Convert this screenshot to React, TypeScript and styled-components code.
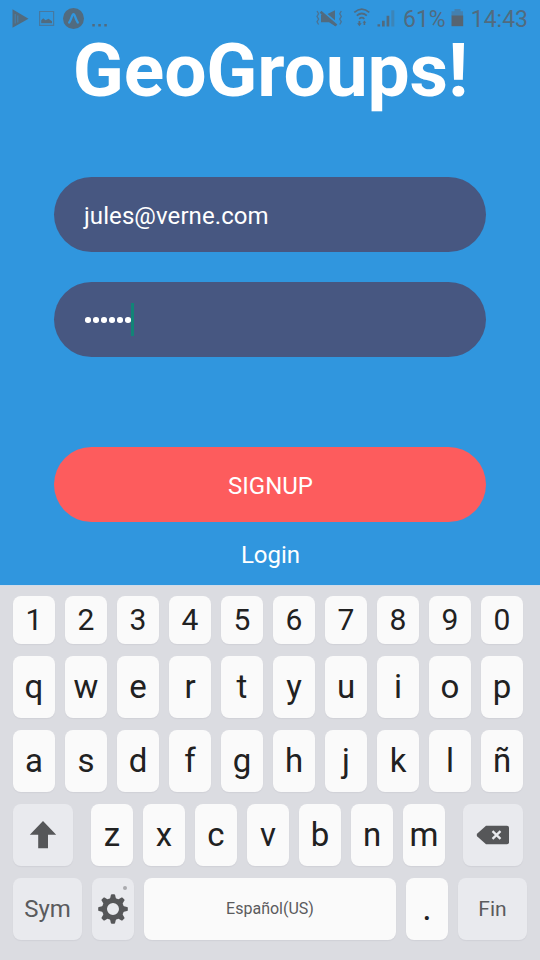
import React from 'react';
import styled, { createGlobalStyle } from 'styled-components';

const GlobalStyle = createGlobalStyle`
  *, *::before, *::after { box-sizing: border-box; }
  body { margin: 0; background: #3096de; font-family: Roboto, "Noto Sans", sans-serif; }
`;

const Screen = styled.div`
  width: 540px;
  height: 960px;
  display: flex;
  flex-direction: column;
  overflow: hidden;
  background: #3096de;
`;

const StatusBar = styled.header`
  height: 37px;
  flex: none;
  display: flex;
  justify-content: space-between;
  color: #516b7f;
`;

const StatusGroup = styled.div`
  display: flex;
`;

const StatusText = styled.span<{ $left: number }>`
  margin-left: ${(p) => p.$left}px;
  font-size: 23px;
  line-height: 40px;
  white-space: nowrap;
`;

const Clock = styled(StatusText)`
  margin-right: 12px;
`;

const BatteryBox = styled.div`
  display: flex;
  margin-left: 5px;
`;

const Form = styled.main`
  height: 548px;
  flex: none;
  display: flex;
  flex-direction: column;
  align-items: center;
  color: #fff;
`;

const Title = styled.h1`
  margin: 0 0 74px 1px;
  height: 66px;
  line-height: 66px;
  font-size: 75px;
  font-weight: 700;
  letter-spacing: -0.15px;
  white-space: nowrap;
`;

const Field = styled.div`
  width: 432px;
  height: 75px;
  flex: none;
  margin-bottom: 30px;
  padding: 2px 30px 0;
  display: flex;
  align-items: center;
  border-radius: 37.5px;
  background: #475781;
  font-size: 24px;
  letter-spacing: 0.09px;
`;

const Dots = styled.div`
  display: flex;
  gap: 2.6px;
  padding: 0 0 1px 1px;
`;

const Dot = styled.i`
  width: 5.5px;
  height: 5.5px;
  border-radius: 50%;
  background: #fff;
`;

const Caret = styled.span`
  width: 3px;
  height: 33px;
  margin-top: -2px;
  background: #128477;
`;

const SignupButton = styled.button`
  width: 432px;
  height: 75px;
  flex: none;
  margin: 60px 0 0;
  padding: 3px 0 0 1px;
  border: 0;
  border-radius: 37.5px;
  background: #fd5c5d;
  color: #fff;
  font: 400 24px Roboto, sans-serif;
`;

const LoginLink = styled.a`
  margin: 18px 0 0 1px;
  line-height: 30px;
  font-size: 24px;
`;

const Keyboard = styled.section`
  height: 375px;
  flex: none;
  padding: 10px 13px 0;
  display: flex;
  flex-direction: column;
  gap: 12px;
  background: #dbdce1;
  border-top: 1px solid #d0dbe9;
`;

const KeyRow = styled.div`
  display: flex;
  gap: 10px;
`;

const KeyGroup = styled.div`
  display: flex;
  gap: 10px;
  margin: 0 8px;
`;

const Key = styled.div<{ $w?: number; $h?: number; $fn?: boolean; $muted?: boolean; $size?: number; $lift?: number }>`
  position: relative;
  flex: none;
  width: ${(p) => p.$w ?? 42}px;
  height: ${(p) => p.$h ?? 62}px;
  padding-bottom: ${(p) => p.$lift ?? 0}px;
  display: flex;
  align-items: center;
  justify-content: center;
  border-radius: 8px;
  background: ${(p) => (p.$fn ? '#e9eaee' : '#fafafa')};
  box-shadow: 0 1px 1px rgba(90, 92, 105, 0.08);
  color: ${(p) => (p.$fn || p.$muted ? '#5a5b5d' : '#212121')};
  font-size: ${(p) => p.$size ?? 33}px;
  line-height: 1;
`;

const HintDot = styled.i`
  position: absolute;
  top: 8px;
  right: 7px;
  width: 4px;
  height: 4px;
  border-radius: 50%;
  background: #aaabae;
`;

const LeftIcons = () => (
  <svg width="112" height="37" viewBox="0 0 112 37" fill="#516b7f">
    <path d="M12.5 9.3 28.5 18.8 12.5 27.8Z" />
    <path d="M15.2 14v9.5M17.8 15.5v7" stroke="#3f86b9" strokeWidth="0.9" />
    <path d="M39.6 11.5h14v13.8h-14z" fill="none" stroke="#4679a1" strokeWidth="1.2" />
    <path d="M41.2 23.3v-3l2-2 2.3 2 3-1.5 3.5 2.5v2Z" />
    <circle cx="73.5" cy="18.5" r="10.5" />
    <path d="M69.2 22.5c2-2.4 2.8-8.3 4.3-8.3s2.3 5.9 4.3 8.3" fill="none" stroke="#3096de" strokeWidth="2.3" strokeLinecap="round" />
    <path d="M92.3 24h2.5v2.6h-2.5zM98.3 24h2.5v2.6h-2.5zM104.3 24h2.5v2.6h-2.5z" />
  </svg>
);

const SignalIcons = () => (
  <svg width="84" height="37" viewBox="314 0 84 37" fill="#516b7f">
    <path d="M320 14.5h3.5L334 23.5V26l-6-3.8h-8Z" />
    <path d="m326.5 14 7.5-3.8v10Z" />
    <path d="m319.5 11.8 16 13.6" stroke="#516b7f" strokeWidth="2.6" />
    <path d="m316 11 1.6 2.7-1.6 2.7 1.6 2.7-1.6 2.7 1.6 2.7M340.3 11l-1.6 2.7 1.6 2.7-1.6 2.7 1.6 2.7-1.6 2.7" fill="none" stroke="#4b7394" strokeWidth="1.3" />
    <g fill="none" stroke="#516b7f" strokeWidth="1.7">
      <path d="M353.3 12.4q7.5-6.6 15 0M355.8 15.7q5-4.4 10 0M358.2 18.8q2.6-2.2 5.2 0" />
    </g>
    <path d="M357.5 21h1.8v2.3h1.4l-2.3 3-2.3-3h1.4ZM362.6 25v-2.2h-1l1.8-2.4 1.8 2.4h-1V25Z" />
    <path d="M376.5 24.2h2.6v2.3h-2.6zM381 20.7h2.7v5.8H381zM385.6 15.7h2.7v10.8h-2.7z" />
    <path d="M390.3 10.3h3v16.2h-3z" opacity=".4" />
  </svg>
);

const BatteryIcon = () => (
  <svg width="13" height="37" viewBox="450 0 13 37">
    <path d="M453.5 9h6v2.2h2.5V16h-11.5v-4.8h3Z" fill="#4480ae" />
    <path d="M450.5 15.5h11.7v10.7h-11.7z" fill="#576470" />
  </svg>
);

const ShiftIcon = () => (
  <svg width="28" height="28" viewBox="0 0 28 28">
    <path d="M14 0 27.2 13.7H19v13.6H9.2V13.7H.8Z" fill="#565759" />
  </svg>
);

const BackspaceIcon = () => (
  <svg width="34" height="20" viewBox="0 0 34 20">
    <path d="M10 .8h21q2 0 2 2v14.4q0 2-2 2H10L1.3 11.5Q0 10 1.3 8.5Z" fill="#565759" />
    <path d="m16.5 6.1 8 7.8m0-7.8-8 7.8" stroke="#e9eaee" strokeWidth="2.3" />
  </svg>
);

const GearIcon = () => (
  <svg width="30" height="30" viewBox="-15 -15 30 30">
    <g fill="#565759">
      {[0, 45, 90, 135, 180, 225, 270, 315].map((angle) => (
        <path key={angle} d="M-3.3-9-2.1-14q.2-.8.9-.8h2.4q.7 0 .9.8L3.3-9Z" transform={`rotate(${angle})`} />
      ))}
    </g>
    <circle r="8.5" fill="none" stroke="#565759" strokeWidth="5" />
  </svg>
);

export default function App() {
  return (
    <>
      <GlobalStyle />
      <Screen>
        <StatusBar>
          <LeftIcons />
          <StatusGroup>
            <SignalIcons />
            <StatusText $left={4}>61%</StatusText>
            <BatteryBox><BatteryIcon /></BatteryBox>
            <Clock $left={7}>14:43</Clock>
          </StatusGroup>
        </StatusBar>
        <Form>
          <Title>GeoGroups!</Title>
          <Field>jules@verne.com</Field>
          <Field>
            <Dots>{Array.from({ length: 6 }, (_, i) => <Dot key={i} />)}</Dots>
            <Caret />
          </Field>
          <SignupButton>SIGNUP</SignupButton>
          <LoginLink>Login</LoginLink>
        </Form>
        <Keyboard>
          <KeyRow>
            {[...'1234567890'].map((c) => <Key key={c} $h={48} $size={30}>{c}</Key>)}
          </KeyRow>
          {['qwertyuiop', 'asdfghjklñ'].map((row) => (
            <KeyRow key={row}>
              {[...row].map((c) => <Key key={c} $lift={2}>{c}</Key>)}
            </KeyRow>
          ))}
          <KeyRow>
            <Key $w={60} $fn><ShiftIcon /></Key>
            <KeyGroup>
              {[...'zxcvbnm'].map((c) => <Key key={c} $lift={2}>{c}</Key>)}
            </KeyGroup>
            <Key $w={60} $fn $lift={1}><BackspaceIcon /></Key>
          </KeyRow>
          <KeyRow>
            <Key $w={69} $fn $size={24}>Sym</Key>
            <Key $fn $lift={1}><HintDot /><GearIcon /></Key>
            <Key $w={252} $muted $size={16}>Español(US)</Key>
            <Key $size={36} $lift={2}>.</Key>
            <Key $w={69} $fn $size={21}>Fin</Key>
          </KeyRow>
        </Keyboard>
      </Screen>
    </>
  );
}
